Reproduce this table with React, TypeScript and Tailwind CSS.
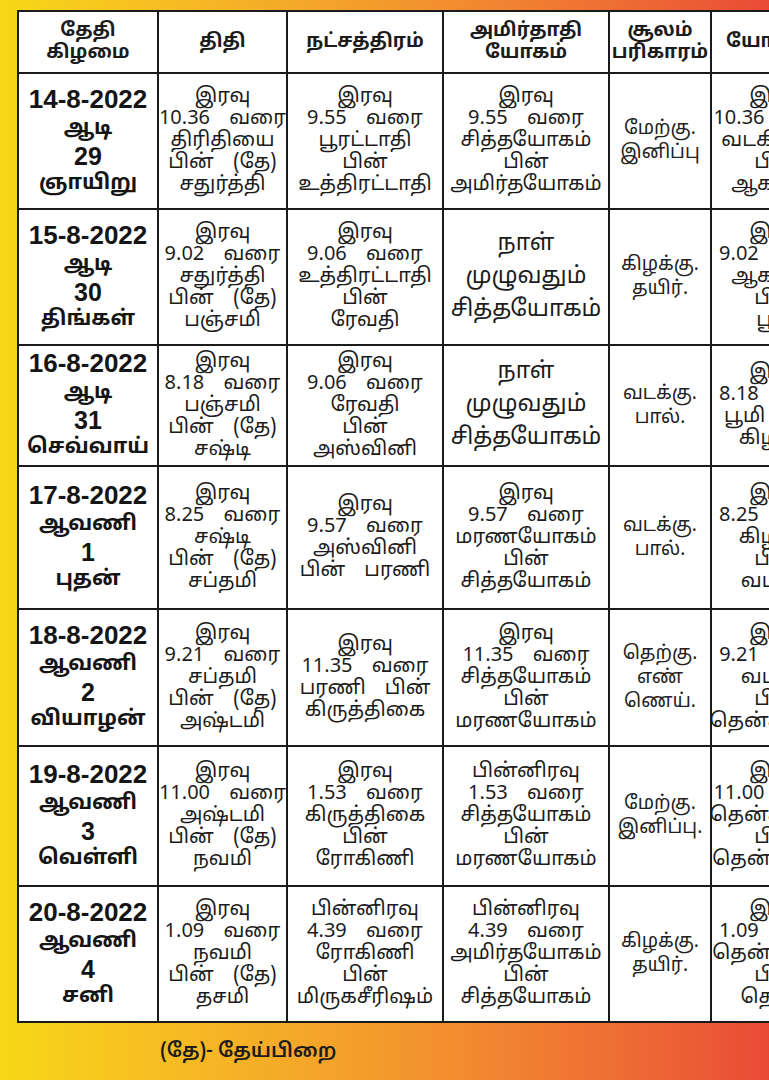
import React from "react";

type Row = {
  date: string[];
  titi: string[];
  nak: string[];
  amir: string[];
  big?: boolean;
  soolam: string[];
  yogini: string[];
};

const rows: Row[] = [
  {
    date: ["14-8-2022", "ஆடி", "29", "ஞாயிறு"],
    titi: ["இரவு", "10.36 வரை", "திரிதியை", "பின் (தே)", "சதுர்த்தி"],
    nak: ["இரவு", "9.55 வரை", "பூரட்டாதி", "பின்", "உத்திரட்டாதி"],
    amir: ["இரவு", "9.55 வரை", "சித்தயோகம்", "பின்", "அமிர்தயோகம்"],
    soolam: ["மேற்கு.", "இனிப்பு"],
    yogini: ["இரவு", "10.36 வரை", "வடகிழக்கு", "பின்", "ஆகாயம்"],
  },
  {
    date: ["15-8-2022", "ஆடி", "30", "திங்கள்"],
    titi: ["இரவு", "9.02 வரை", "சதுர்த்தி", "பின் (தே)", "பஞ்சமி"],
    nak: ["இரவு", "9.06 வரை", "உத்திரட்டாதி", "பின்", "ரேவதி"],
    amir: ["நாள்", "முழுவதும்", "சித்தயோகம்"],
    big: true,
    soolam: ["கிழக்கு.", "தயிர்."],
    yogini: ["இரவு", "9.02 வரை", "ஆகாயம்", "பின்", "பூமி"],
  },
  {
    date: ["16-8-2022", "ஆடி", "31", "செவ்வாய்"],
    titi: ["இரவு", "8.18 வரை", "பஞ்சமி", "பின் (தே)", "சஷ்டி"],
    nak: ["இரவு", "9.06 வரை", "ரேவதி", "பின்", "அஸ்வினி"],
    amir: ["நாள்", "முழுவதும்", "சித்தயோகம்"],
    big: true,
    soolam: ["வடக்கு.", "பால்."],
    yogini: ["இரவு", "8.18 வரை", "பூமி பின்", "கிழக்கு"],
  },
  {
    date: ["17-8-2022", "ஆவணி", "1", "புதன்"],
    titi: ["இரவு", "8.25 வரை", "சஷ்டி", "பின் (தே)", "சப்தமி"],
    nak: ["இரவு", "9.57 வரை", "அஸ்வினி", "பின் பரணி"],
    amir: ["இரவு", "9.57 வரை", "மரணயோகம்", "பின்", "சித்தயோகம்"],
    soolam: ["வடக்கு.", "பால்."],
    yogini: ["இரவு", "8.25 வரை", "கிழக்கு", "பின்", "வடக்கு"],
  },
  {
    date: ["18-8-2022", "ஆவணி", "2", "வியாழன்"],
    titi: ["இரவு", "9.21 வரை", "சப்தமி", "பின் (தே)", "அஷ்டமி"],
    nak: ["இரவு", "11.35 வரை", "பரணி பின்", "கிருத்திகை"],
    amir: ["இரவு", "11.35 வரை", "சித்தயோகம்", "பின்", "மரணயோகம்"],
    soolam: ["தெற்கு.", "எண்", "ணெய்."],
    yogini: ["இரவு", "9.21 வரை", "வடக்கு", "பின்", "தென்கிழக்கு"],
  },
  {
    date: ["19-8-2022", "ஆவணி", "3", "வெள்ளி"],
    titi: ["இரவு", "11.00 வரை", "அஷ்டமி", "பின் (தே)", "நவமி"],
    nak: ["இரவு", "1.53 வரை", "கிருத்திகை", "பின்", "ரோகிணி"],
    amir: ["பின்னிரவு", "1.53 வரை", "சித்தயோகம்", "பின்", "மரணயோகம்"],
    soolam: ["மேற்கு.", "இனிப்பு."],
    yogini: ["இரவு", "11.00 வரை", "தென்கிழக்கு", "பின்", "தென்மேற்கு"],
  },
  {
    date: ["20-8-2022", "ஆவணி", "4", "சனி"],
    titi: ["இரவு", "1.09 வரை", "நவமி", "பின் (தே)", "தசமி"],
    nak: ["பின்னிரவு", "4.39 வரை", "ரோகிணி", "பின்", "மிருகசீரிஷம்"],
    amir: ["பின்னிரவு", "4.39 வரை", "அமிர்தயோகம்", "பின்", "சித்தயோகம்"],
    soolam: ["கிழக்கு.", "தயிர்."],
    yogini: ["இரவு", "1.09 வரை", "தென்மேற்கு", "பின்", "தெற்கு"],
  },
];

const rowHeights = ["h-[134px]", "h-[134px]", "h-[119px]", "h-[141px]", "h-[135px]", "h-[138px]", "h-[134px]"];

function Lines({ lines, className }: { lines: string[]; className: string }) {
  return (
    <div className={className}>
      {lines.map((l, i) => (
        <div key={i} className="whitespace-nowrap">
          {l}
        </div>
      ))}
    </div>
  );
}

const cell = "bg-white flex flex-col items-center justify-center text-center overflow-hidden";
const body = "text-[20px] leading-[22px] text-[#1c1c1c] [word-spacing:14px]";
const latin = { fontFamily: '"Liberation Sans", "Noto Sans Tamil", sans-serif' };

export default function App() {
  return (
    <div
      className="w-[769px] h-[1080px] overflow-hidden bg-gradient-to-r from-[#f7d716] via-[#f39a2c] to-[#e94a36] flex flex-col"
      style={{ fontFamily: '"Noto Sans Tamil", "Lohit Tamil", "Noto Sans", "DejaVu Sans", sans-serif' }}
    >
      <div className="ml-[17px] mt-[10px] w-[830px] shrink-0 bg-[#1b1b1b] p-[2px] grid grid-cols-[138px_127px_154px_164px_100px_130px] gap-[2px]">
        {["தேதி|கிழமை", "திதி", "நட்சத்திரம்", "அமிர்தாதி|யோகம்", "சூலம்|பரிகாரம்", "யோகினி"].map((h, i) => (
          <div key={i} className={`${cell} h-[60px]`}>
            <Lines lines={h.split("|")} className="text-[19px] leading-[22px] font-bold text-[#1c1c1c]" />
          </div>
        ))}
        {rows.map((r, i) => (
          <React.Fragment key={i}>
            <div className={`${cell} ${rowHeights[i]} font-bold text-[#151515]`}>
              <div className="text-[26px] leading-[31px]" style={latin}>
                {r.date[0]}
              </div>
              <div className="text-[21px] leading-[28px]">{r.date[1]}</div>
              <div className="text-[25px] leading-[27px]" style={latin}>
                {r.date[2]}
              </div>
              <div className="text-[21px] leading-[29px]">{r.date[3]}</div>
            </div>
            <div className={`${cell} ${rowHeights[i]}`}>
              <Lines lines={r.titi} className={body} />
            </div>
            <div className={`${cell} ${rowHeights[i]}`}>
              <Lines lines={r.nak} className={body} />
            </div>
            <div className={`${cell} ${rowHeights[i]}`}>
              <Lines
                lines={r.amir}
                className={r.big ? "text-[23px] leading-[33px] text-[#1c1c1c]" : body}
              />
            </div>
            <div className={`${cell} ${rowHeights[i]}`}>
              <Lines lines={r.soolam} className="text-[19px] leading-[24px] text-[#222222]" />
            </div>
            <div className={`${cell} ${rowHeights[i]}`}>
              <Lines lines={r.yogini} className={body} />
            </div>
          </React.Fragment>
        ))}
      </div>
      <div className="ml-[160px] mt-[15px] text-[20px] leading-[28px] font-semibold text-[#1c1c1c]">(தே)- தேய்பிறை</div>
    </div>
  );
}
